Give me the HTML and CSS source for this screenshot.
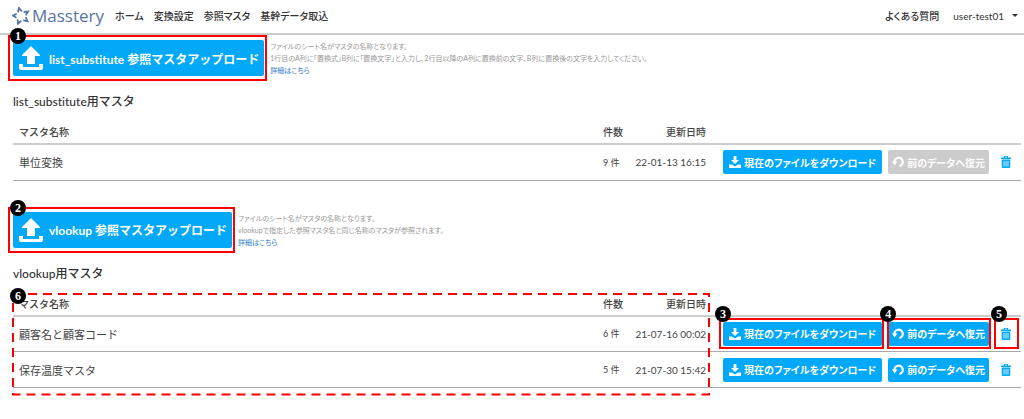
FILE: index.html
```html
<!DOCTYPE html>
<html lang="ja">
    <head>
        <meta charset="UTF-8">
        <meta name="viewport" content="width=device-width, initial-scale=1.0">
        <title>Masstery</title>
        <link rel="stylesheet" href="styles.css">
    </head>

    <body>
        <!-- shared icons -->
        <svg class="sprite" aria-hidden="true">
            <symbol id="upload" viewBox="0 0 24 24">
                <path d="M12 0 L21 9 V10 H16 V18 H8 V10 H3 V9 Z M0 18 H4 V21 H20 V18 H24 V22 Q24 24 22 24 H2 Q0 24 0 22 Z"/>
            </symbol>
            <symbol id="download" viewBox="0 0 12 12">
                <path d="M4.6 0 H7.4 V4 H10 L6 8 L2 4 H4.6 Z M0 8.4 H3 L6 10.6 L9 8.4 H12 V12 H0 Z"/>
            </symbol>
            <symbol id="restore" viewBox="0 0 12 12">
                <path d="M2.4 6.4 A4.2 4.2 0 1 1 7.4 10" fill="none" stroke="currentColor" stroke-width="2.2"/>
                <path d="M0 5.4 H5.4 L2.6 9.4 Z"/>
            </symbol>
            <symbol id="trash" viewBox="0 0 10 12">
                <path fill-rule="evenodd" d="M3 0 H7 V1.4 H10 V3 H0 V1.4 H3 Z M4 .8 V1.4 H6 V.8 Z M.7 3.6 H9.3 V11 Q9.3 12 8.3 12 H1.7 Q.7 12 .7 11 Z M2.6 5 V10.4 H3.4 V5 Z M4.6 5 V10.4 H5.4 V5 Z M6.6 5 V10.4 H7.4 V5 Z"/>
            </symbol>
        </svg>

        <header class="header">
            <a href="#" class="logo">
                <svg class="logo-mark" viewBox="0 0 18 18">
                    <path d="M6 5.3 L6.9 1 L9.8 4.3 M11.6 5 L16 4.5 L13.7 8.2 M13.6 10.2 L15.5 14.2 L11.2 13.3 M9.3 13.8 L6 16.7 L5.6 12.4 M4.5 10.7 L.9 8.6 L4.7 6.8"/>
                </svg>
                <span class="logo-text">Masstery</span>
            </a>
            <nav class="nav">
                <a href="#">ホーム</a>
                <a href="#">変換設定</a>
                <a href="#">参照マスタ</a>
                <a href="#">基幹データ取込</a>
            </nav>
            <div class="user-menu">
                <a href="#">よくある質問</a>
                <button class="user-button" type="button">user-test01 <span class="caret"></span></button>
            </div>
        </header>

        <main class="content">
            <section class="master">
                <div class="upload">
                    <div class="marked">
                        <button class="upload-button" type="button"><svg><use href="#upload"/></svg>list_substitute 参照マスタアップロード</button>
                        <span class="frame"></span>
                        <span class="badge">1</span>
                    </div>
                    <div class="note">
                        <p>ファイルのシート名がマスタの名称となります。</p>
                        <p>1行目のA列に「置換式」B列に「置換文字」と入力し、2行目以降のA列に置換前の文字、B列に置換後の文字を入力してください。</p>
                        <a href="#">詳細はこちら</a>
                    </div>
                </div>
                <h2 class="title">list_substitute用マスタ</h2>
                <table class="table">
                    <thead>
                        <tr>
                            <th>マスタ名称</th>
                            <th class="count">件数</th>
                            <th class="date">更新日時</th>
                            <th class="actions"></th>
                        </tr>
                    </thead>
                    <tbody>
                        <tr>
                            <td>単位変換</td>
                            <td class="count">9 件</td>
                            <td class="date">22-01-13 16:15</td>
                            <td class="actions">
                                <div class="buttons">
                                    <button class="button download" type="button"><svg><use href="#download"/></svg>現在のファイルをダウンロード</button>
                                    <button class="button" type="button" disabled><svg><use href="#restore"/></svg>前のデータへ復元</button>
                                    <button class="trash" type="button" aria-label="削除"><svg><use href="#trash"/></svg></button>
                                </div>
                            </td>
                        </tr>
                    </tbody>
                </table>
            </section>

            <section class="master">
                <div class="upload">
                    <div class="marked">
                        <button class="upload-button" type="button"><svg><use href="#upload"/></svg>vlookup 参照マスタアップロード</button>
                        <span class="frame"></span>
                        <span class="badge">2</span>
                    </div>
                    <div class="note">
                        <p>ファイルのシート名がマスタの名称となります。</p>
                        <p>vlookupで指定した参照マスタ名と同じ名称のマスタが参照されます。</p>
                        <a href="#">詳細はこちら</a>
                    </div>
                </div>
                <h2 class="title">vlookup用マスタ</h2>
                <div class="table-area">
                    <table class="table">
                        <thead>
                            <tr>
                                <th>マスタ名称</th>
                                <th class="count">件数</th>
                                <th class="date">更新日時</th>
                                <th class="actions"></th>
                            </tr>
                        </thead>
                        <tbody>
                            <tr>
                                <td>顧客名と顧客コード</td>
                                <td class="count">6 件</td>
                                <td class="date">21-07-16 00:02</td>
                                <td class="actions">
                                    <div class="buttons">
                                        <div class="marked small wide">
                                            <button class="button download" type="button"><svg><use href="#download"/></svg>現在のファイルをダウンロード</button>
                                            <span class="frame"></span>
                                            <span class="badge">3</span>
                                        </div>
                                        <div class="marked small">
                                            <button class="button" type="button"><svg><use href="#restore"/></svg>前のデータへ復元</button>
                                            <span class="frame"></span>
                                            <span class="badge">4</span>
                                        </div>
                                        <div class="marked small narrow">
                                            <button class="trash" type="button" aria-label="削除"><svg><use href="#trash"/></svg></button>
                                            <span class="frame"></span>
                                            <span class="badge">5</span>
                                        </div>
                                    </div>
                                </td>
                            </tr>
                            <tr>
                                <td>保存温度マスタ</td>
                                <td class="count">5 件</td>
                                <td class="date">21-07-30 15:42</td>
                                <td class="actions">
                                    <div class="buttons">
                                        <button class="button download" type="button"><svg><use href="#download"/></svg>現在のファイルをダウンロード</button>
                                        <button class="button" type="button"><svg><use href="#restore"/></svg>前のデータへ復元</button>
                                        <button class="trash" type="button" aria-label="削除"><svg><use href="#trash"/></svg></button>
                                    </div>
                                </td>
                            </tr>
                        </tbody>
                    </table>
                    <div class="dashed">
                        <svg><rect width="100%" height="100%"/></svg>
                        <span class="badge">6</span>
                    </div>
                </div>
            </section>
        </main>
    </body>
</html>
```

FILE: styles.css
```css
* {
    box-sizing: border-box;
}

body {
    margin: 0;
    background-color: #fff;
    color: #333;
    font-family: Lato, 'Noto Sans CJK JP', sans-serif;
    font-size: 10px;
    font-variant-ligatures: none;
}

a {
    color: inherit;
    text-decoration: none;
}

button {
    border: none;
    padding: 0;
    background: none;
    color: inherit;
    font-family: inherit;
    cursor: pointer;
}

svg {
    fill: currentColor;
}

.sprite {
    display: none;
}

.header {
    display: flex;
    align-items: center;
    height: 35px;
    padding: 0 6px 2px 12px;
    border-bottom: 2px solid #ccc;
}

.logo {
    display: flex;
    align-items: center;
    gap: 2px;
    color: #5674a5;
}

.logo-mark {
    width: 18px;
    height: 18px;
    fill: none;
    stroke: currentColor;
    stroke-width: 1.8;
}

.logo-text {
    font-family: 'Open Sans', sans-serif;
    font-size: 17px;
    line-height: 24px;
}

.nav {
    display: flex;
    gap: 10px;
    margin-left: 11px;
    font-weight: 500;
    font-feature-settings: "palt";
}

.user-menu {
    display: flex;
    align-items: center;
    gap: 14px;
    margin-left: auto;
    font-weight: 500;
    font-feature-settings: "palt";
}

.user-button {
    display: flex;
    align-items: center;
    gap: 8px;
    font-size: 10px;
}

.caret {
    border: 3px solid transparent;
    border-top-color: #333;
    border-bottom: none;
}

.content {
    padding: 5px 3px 0 13px;
}

.master {
    margin-bottom: 31px;
}

.upload {
    display: flex;
    gap: 6px;
}

.marked {
    position: relative;
    flex-shrink: 0;
}

.upload-button {
    display: flex;
    align-items: center;
    gap: 6px;
    height: 36px;
    padding: 0 5px 0 6px;
    border-radius: 2px;
    background-color: #03a9f8;
    color: #fff;
    font-size: 12px;
    font-weight: bold;
}

.upload-button svg {
    width: 24px;
    height: 24px;
}

.frame {
    position: absolute;
    top: -5px;
    right: -3px;
    bottom: -5px;
    left: -5px;
    border: 2px solid #f00;
    pointer-events: none;
}

.badge {
    position: absolute;
    top: -12px;
    left: -3px;
    width: 16px;
    height: 16px;
    border-radius: 50%;
    background-color: #000;
    color: #fff;
    font-family: 'Liberation Serif', serif;
    font-size: 12px;
    font-weight: bold;
    line-height: 16px;
    text-align: center;
}

.small .frame {
    top: -4px;
    right: -2px;
    bottom: -3px;
    left: -1px;
}

.small .badge {
    top: -16px;
    left: -8px;
}

.wide .frame {
    left: -4px;
}

.narrow .badge {
    left: -4px;
}

.note {
    color: #999;
    font-size: 7px;
    line-height: 12px;
    font-feature-settings: "palt";
}

.note p {
    margin: 0;
}

.note a {
    color: #2f7dc8;
}

.title {
    margin: 16px 0 8px;
    font-size: 12px;
    font-weight: 500;
    line-height: 20px;
}

.table-area {
    position: relative;
}

.table {
    width: 100%;
    table-layout: fixed;
    border-collapse: collapse;
}

.table th,
.table td {
    height: 36px;
    padding: 0 6px;
    border-bottom: 1px solid #aaa;
    color: #444;
    font-size: 11px;
    font-weight: normal;
    text-align: left;
    white-space: nowrap;
}

.table th {
    height: 24px;
    border-bottom: 2px solid #ccc;
    font-size: 10px;
    font-weight: 500;
}

.table .count {
    width: 26px;
    padding: 0;
}

.table td.count {
    font-size: 9px;
}

.table .date {
    width: 94px;
    padding: 0 17px 0 0;
    text-align: right;
}

.table td.date {
    font-size: 10px;
}

.table .actions {
    width: 298px;
    padding: 0;
}

.buttons {
    display: flex;
    gap: 6px;
}

.button {
    display: flex;
    align-items: center;
    justify-content: center;
    gap: 3px;
    height: 24px;
    padding: 0 4px;
    border-radius: 2px;
    background-color: #03a9f8;
    color: #fff;
    font-size: 10px;
    font-weight: bold;
    font-feature-settings: "palt";
}

.download {
    padding: 0 6px;
}

.button:disabled {
    background-color: #ccc;
    cursor: default;
}

.button svg {
    width: 12px;
    height: 12px;
}

.trash {
    display: flex;
    align-items: center;
    justify-content: center;
    width: 22px;
    height: 24px;
    color: #03a9f8;
}

.trash svg {
    width: 10px;
    height: 12px;
}

.dashed {
    position: absolute;
    top: 2px;
    right: 312px;
    bottom: -6px;
    left: 0;
    pointer-events: none;
}

.dashed svg {
    display: block;
    width: 100%;
    height: 100%;
    overflow: visible;
    fill: none;
    stroke: #f00;
    stroke-width: 2;
    stroke-dasharray: 9 6;
}

.dashed .badge {
    top: -6px;
}
```
